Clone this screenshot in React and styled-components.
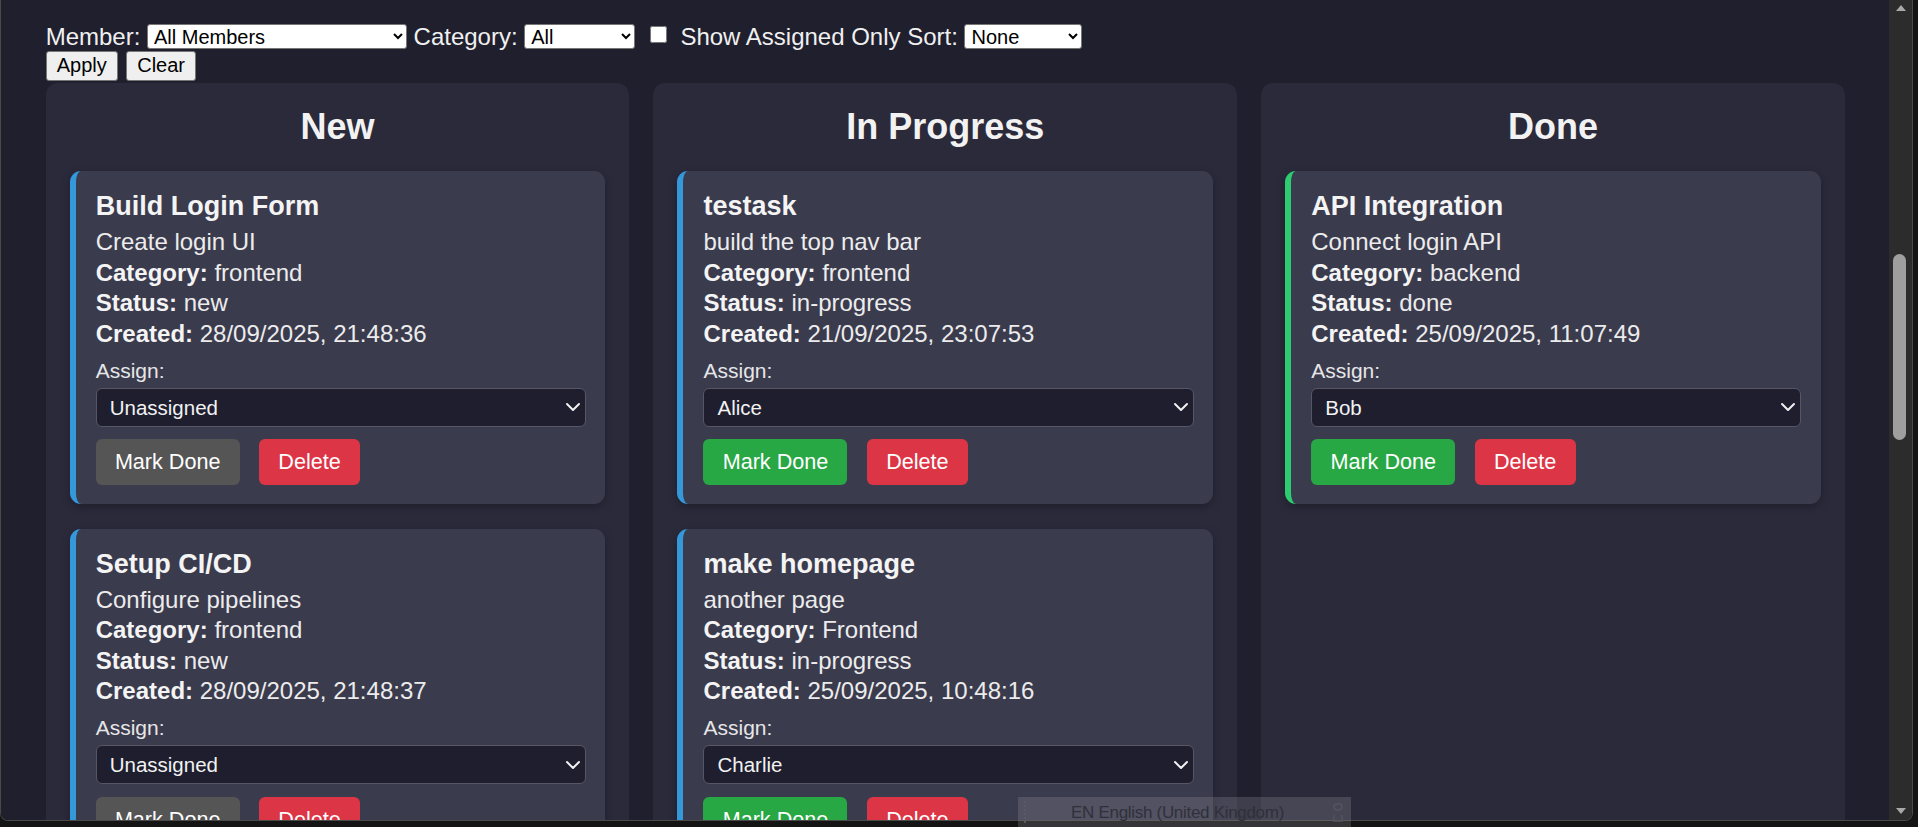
import React from 'react';
import styled, { createGlobalStyle } from 'styled-components';
import { ChevronDown } from 'lucide-react';

const GlobalStyle = createGlobalStyle`
  html, body { margin: 0; padding: 0; background: #121212; overflow: hidden; }
  body { font-family: "Liberation Sans", Arial, sans-serif; }
  * { box-sizing: border-box; }
`;

const Window = styled.div`
  position: relative;
  width: 1918px;
  height: 827px;
  background: #141414;
  overflow: hidden;
`;

const Frame = styled.div`
  display: flex;
  width: 1913px;
  height: 821px;
  border-left: 1px solid #4a4a4a;
  border-right: 1px solid #4a4a4a;
  border-bottom: 1px solid #4a4a4a;
  border-radius: 0 0 8px 8px;
  overflow: hidden;
`;

const Viewport = styled.main`
  display: flex;
  flex-direction: column;
  width: 1888px;
  height: 820px;
  overflow: hidden;
  background: #1f1f2e;
  padding: 23px 44px 0 44.7px;
`;

const FilterRow = styled.div`
  display: flex;
  align-items: center;
  gap: 6.6px;
  height: 27.6px;
  font-size: 24px;
  color: #f0f0f0;
`;

const FilterLabel = styled.span`
  white-space: nowrap;
  line-height: 27.6px;
`;

const FilterSelect = styled.select`
  width: ${(p) => p.$w}px;
  height: 25px;
  font-family: "Liberation Sans", Arial, sans-serif;
  font-size: 20px;
  color: #000;
  background: #fff;
  border: 1px solid #767676;
  border-radius: 3px;
  padding: 0 2px;
`;

const Checkbox = styled.input`
  width: 17px;
  height: 17px;
  margin: 0 7px 4px 8px;
`;

const ButtonRow = styled.div`
  display: flex;
  gap: 8.5px;
  margin-top: 0.1px;
`;

const PlainButton = styled.button`
  height: 30.3px;
  padding: 0 10px;
  font-family: "Liberation Sans", Arial, sans-serif;
  font-size: 20px;
  color: #000;
  background: #efefef;
  border: 1px solid #767676;
  border-radius: 3px;
`;

const Board = styled.div`
  display: grid;
  grid-template-columns: repeat(3, 1fr);
  gap: 24px;
  margin-top: 1.7px;
  flex: 1 0 auto;
`;

const Column = styled.section`
  background: #2a2a3b;
  border-radius: 12px;
  padding: 23px 24px 24px;
  display: flex;
  flex-direction: column;
  gap: 25px;
`;

const ColumnTitle = styled.h2`
  margin: 0 0 -0.7px;
  font-size: 36px;
  line-height: 41.4px;
  font-weight: 700;
  text-align: center;
  color: #f2f2f2;
`;

const Card = styled.article`
  background: #3b3b4e;
  border-left: 6px solid ${(p) => p.$accent};
  border-radius: 11px;
  padding: 20px 19.7px 18.6px 20px;
  box-shadow: 0 3px 9px rgba(0, 0, 0, 0.28);
  color: #ececec;
`;

const CardTitle = styled.h3`
  margin: 0 0 5px;
  font-size: 27px;
  line-height: 31px;
  font-weight: 700;
  color: #f4f4f4;
`;

const InfoRow = styled.div`
  font-size: 24px;
  line-height: 30.4px;
  white-space: nowrap;

  strong {
    font-weight: 700;
    color: #f4f4f4;
  }
`;

const AssignLabel = styled.label`
  display: block;
  margin-top: 9.5px;
  font-size: 21px;
  line-height: 24px;
  color: #e6e6e6;
`;

const SelectWrap = styled.div`
  position: relative;
  margin-top: 5px;
`;

const AssignSelect = styled.select`
  appearance: none;
  -webkit-appearance: none;
  display: block;
  width: 100%;
  height: 39.3px;
  padding: 0 34px 0 13px;
  font-family: "Liberation Sans", Arial, sans-serif;
  font-size: 20.5px;
  color: #f2f2f2;
  background: #1e1e2e;
  border: 1px solid #565665;
  border-radius: 6px;
`;

const Chevron = styled(ChevronDown)`
  position: absolute;
  right: 1px;
  top: 50%;
  transform: translateY(-50%);
  color: #f0f0f0;
  pointer-events: none;
`;

const Actions = styled.div`
  display: flex;
  gap: 19.5px;
  margin-top: 12.5px;
`;

const ActionButton = styled.button`
  height: 46px;
  padding: 0 19.2px;
  font-family: "Liberation Sans", Arial, sans-serif;
  font-size: 21.6px;
  color: #fff;
  background: ${(p) => p.$bg};
  border: none;
  border-radius: 6px;
`;

const Scrollbar = styled.div`
  position: relative;
  width: 23px;
  height: 820px;
  background: #2c2c2c;
  display: flex;
  flex-direction: column;
  align-items: center;
  justify-content: space-between;
  padding: 4px 0 5px;
`;

const Thumb = styled.div`
  position: absolute;
  left: 4px;
  top: 254px;
  width: 13px;
  height: 186px;
  border-radius: 7px;
  background: #9f9f9f;
`;

const LangBar = styled.div`
  position: absolute;
  left: 1018px;
  top: 797px;
  width: 333px;
  height: 30px;
  display: flex;
  align-items: center;
  padding: 0 8px 0 6px;
  background: rgba(150, 150, 162, 0.26);
  color: #30303a;
  font-size: 17px;
`;

const Grip = styled.span`
  width: 2px;
  height: 22px;
  border-left: 2px dotted #5a5a66;
`;

const LangText = styled.span`
  flex: 1;
  text-align: center;
  white-space: nowrap;
  padding: 2px 4px 0 0;
  letter-spacing: -0.3px;
`;

const LangIcons = styled.span`
  display: flex;
  flex-direction: column;
  gap: 3px;
`;

const columns = [
  {
    title: 'New',
    tasks: [
      { title: 'Build Login Form', desc: 'Create login UI', cat: 'frontend', status: 'new', created: '28/09/2025, 21:48:36', assign: 'Unassigned' },
      { title: 'Setup CI/CD', desc: 'Configure pipelines', cat: 'frontend', status: 'new', created: '28/09/2025, 21:48:37', assign: 'Unassigned' },
    ],
  },
  {
    title: 'In Progress',
    tasks: [
      { title: 'testask', desc: 'build the top nav bar', cat: 'frontend', status: 'in-progress', created: '21/09/2025, 23:07:53', assign: 'Alice' },
      { title: 'make homepage', desc: 'another page', cat: 'Frontend', status: 'in-progress', created: '25/09/2025, 10:48:16', assign: 'Charlie' },
    ],
  },
  {
    title: 'Done',
    tasks: [
      { title: 'API Integration', desc: 'Connect login API', cat: 'backend', status: 'done', created: '25/09/2025, 11:07:49', assign: 'Bob' },
    ],
  },
];

function TaskCard({ t }) {
  const accent = t.status === 'done' ? '#2ecc71' : '#3498db';
  const doneBg = t.status === 'new' ? '#555555' : '#28a745';
  return (
    <Card $accent={accent}>
      <CardTitle>{t.title}</CardTitle>
      <InfoRow>{t.desc}</InfoRow>
      <InfoRow><strong>Category:</strong> {t.cat}</InfoRow>
      <InfoRow><strong>Status:</strong> {t.status}</InfoRow>
      <InfoRow><strong>Created:</strong> {t.created}</InfoRow>
      <AssignLabel>Assign:</AssignLabel>
      <SelectWrap>
        <AssignSelect defaultValue={t.assign}>
          <option>Unassigned</option>
          <option>Alice</option>
          <option>Bob</option>
          <option>Charlie</option>
        </AssignSelect>
        <Chevron size={24} strokeWidth={2} />
      </SelectWrap>
      <Actions>
        <ActionButton $bg={doneBg}>Mark Done</ActionButton>
        <ActionButton $bg="#dc3545">Delete</ActionButton>
      </Actions>
    </Card>
  );
}

export default function App() {
  return (
    <>
      <GlobalStyle />
      <Window>
        <Frame>
          <Viewport>
            <FilterRow>
              <FilterLabel>Member:</FilterLabel>
              <FilterSelect $w={260}><option>All Members</option></FilterSelect>
              <FilterLabel>Category:</FilterLabel>
              <FilterSelect $w={111}><option>All</option></FilterSelect>
              <Checkbox type="checkbox" />
              <FilterLabel>Show Assigned Only Sort:</FilterLabel>
              <FilterSelect $w={118}><option>None</option></FilterSelect>
            </FilterRow>
            <ButtonRow>
              <PlainButton>Apply</PlainButton>
              <PlainButton>Clear</PlainButton>
            </ButtonRow>
            <Board>
              {columns.map((c) => (
                <Column key={c.title}>
                  <ColumnTitle>{c.title}</ColumnTitle>
                  {c.tasks.map((t) => (
                    <TaskCard key={t.title} t={t} />
                  ))}
                </Column>
              ))}
            </Board>
          </Viewport>
          <Scrollbar>
            <svg width="12" height="8" viewBox="0 0 12 8"><path d="M6 1 L11 7 L1 7 Z" fill="#a8a8a8" /></svg>
            <Thumb />
            <svg width="12" height="8" viewBox="0 0 12 8"><path d="M1 1 L11 1 L6 7 Z" fill="#a8a8a8" /></svg>
          </Scrollbar>
        </Frame>
        <LangBar>
          <Grip />
          <LangText>EN English (United Kingdom)</LangText>
          <LangIcons>
            <svg width="10" height="8" viewBox="0 0 10 8"><rect x="1" y="1" width="8" height="6" rx="3" fill="none" stroke="#55555f" strokeWidth="1.5" /></svg>
            <svg width="10" height="8" viewBox="0 0 10 8"><path d="M1 1 V7 H9 V1" fill="none" stroke="#55555f" strokeWidth="1.5" /></svg>
          </LangIcons>
        </LangBar>
      </Window>
    </>
  );
}
